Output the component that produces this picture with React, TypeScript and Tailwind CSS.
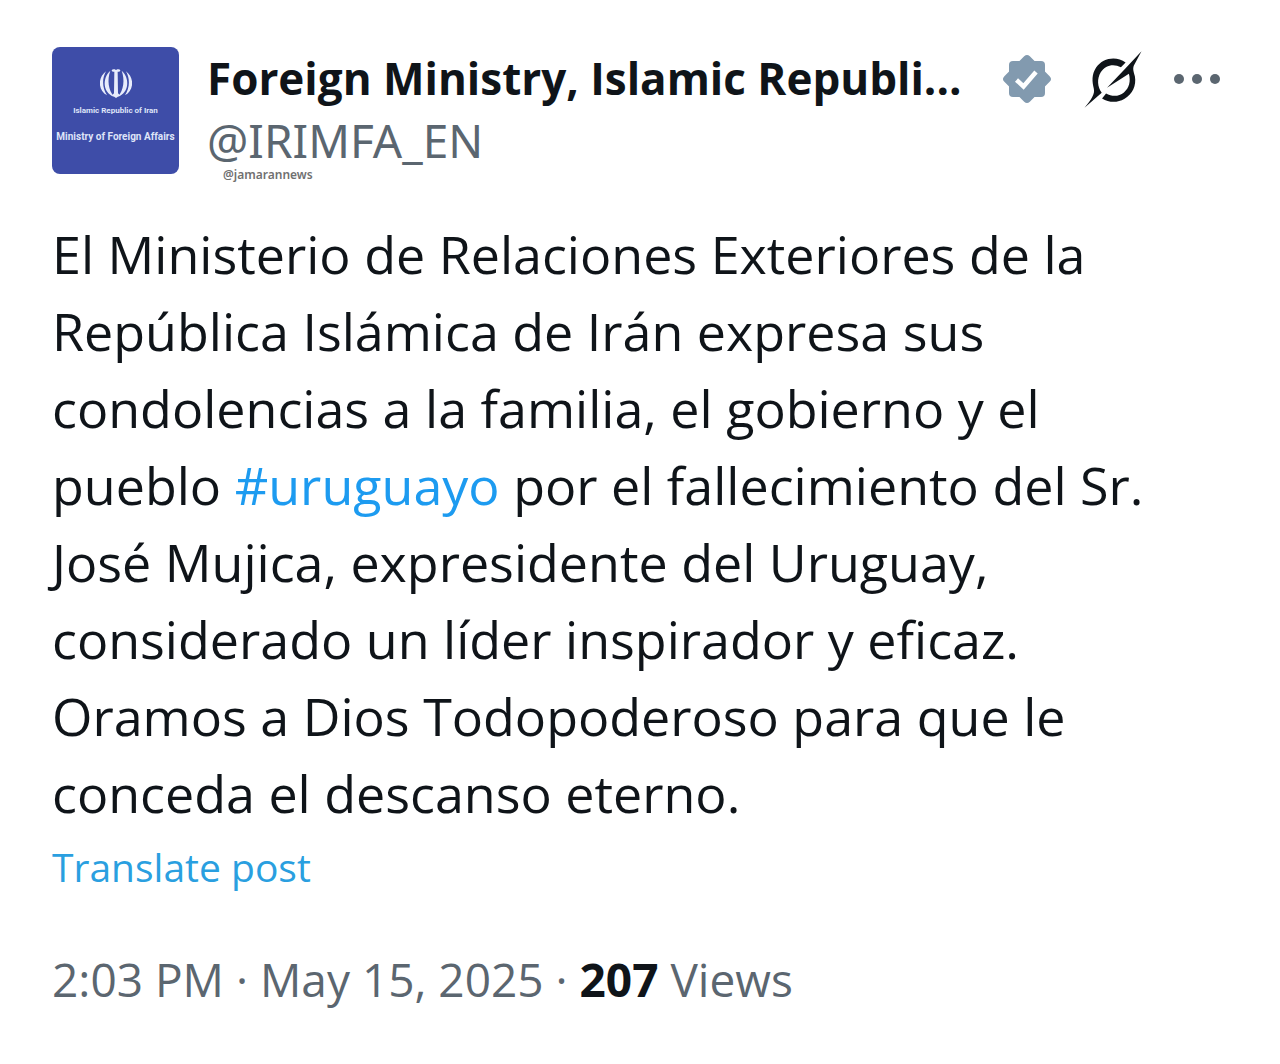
const post = {
  name: 'Foreign Ministry, Islamic Republi...',
  handle: '@IRIMFA_EN',
  watermark: '@jamarannews',
  time: '2:03 PM',
  date: 'May 15, 2025',
  views: '207',
};

function Avatar() {
  return (
    <a
      href="#profile"
      className="flex size-[127px] shrink-0 flex-col items-center overflow-hidden rounded-lg bg-[#3e4da8] pt-5 text-center font-['Roboto',sans-serif] font-bold whitespace-nowrap text-[#dfe4f8]"
    >
      <svg viewBox="0 0 96 90" className="h-8 w-8" fill="#e8ecfb" aria-hidden="true">
        <path d="M45 4 Q48 9 51 4 Q62 2 61 8 Q56 13 53 11 L54 76 L60 82 L48 90 L36 82 L42 76 L43 11 Q40 13 35 8 Q34 2 45 4Z" />
        <path d="M31 8 C6 30 8 74 42 86 C25 66 21 36 31 8Z" />
        <path d="M65 8 C90 30 88 74 54 86 C71 66 75 36 65 8Z" />
        <path d="M18 10 C-8 30 -6 66 21 82 C7 60 5 34 18 10Z" />
        <path d="M78 10 C104 30 102 66 75 82 C89 60 91 34 78 10Z" />
      </svg>
      <span className="mt-2 text-[8px] leading-2">Islamic Republic of Iran</span>
      <span className="mt-4 text-[10px] leading-3">Ministry of Foreign Affairs</span>
    </a>
  );
}

function VerifiedBadge() {
  return (
    <svg viewBox="0 0 50 50" className="size-[50px] shrink-0" role="img" aria-label="Verified">
      <g fill="#829aaf">
        <rect x="7" y="7" width="36" height="36" rx="4" />
        <rect x="7" y="7" width="36" height="36" rx="4" transform="rotate(45 25 25)" />
      </g>
      <path d="M14.5 26 L21.5 32.5 L34 18" fill="none" stroke="#fff" strokeWidth="4.5" />
    </svg>
  );
}

function GrokIcon() {
  return (
    <svg viewBox="14 8 174 172" className="h-[57px] w-[58px]" fill="#0f1419" aria-hidden="true">
      <path d="M139 43 C112 22 70 28 50 58 C36 80 38 100 43 121 C47 138 36 154 15 179 L67 134 C54 116 52 92 64 72 C78 50 103 45 125 57 Z" />
      <path d="M187 9 L164 52 C160 62 163 70 167 84 C172 112 160 138 136 152 C112 166 88 163 68 151 L80 136 C98 146 118 146 134 133 C150 120 155 100 149 77 L83 119 L139 60 Z" />
    </svg>
  );
}

export default function App() {
  return (
    <main className="min-h-screen bg-white font-['Open_Sans',sans-serif] text-[#0f1419]">
      <article className="px-[52px] pt-[47px]">
        {/* Author */}
        <header className="flex items-start">
          <Avatar />
          <div className="ml-7 min-w-0 flex-1">
            <h1 className="text-[44px] leading-[62px] font-bold whitespace-nowrap">{post.name}</h1>
            <p className="font-['Noto_Sans',sans-serif] text-[46px] leading-[62px] text-[#5b6670]">{post.handle}</p>
            <p className="pl-4 font-['Noto_Sans',sans-serif] text-xs leading-2 font-semibold text-[#707070]">
              {post.watermark}
            </p>
          </div>
          <div className="flex h-16 items-center">
            <VerifiedBadge />
            <button type="button" aria-label="Grok" className="ml-8">
              <GrokIcon />
            </button>
            <button type="button" aria-label="More" className="ml-8 flex gap-2 pr-2">
              <span className="size-2.5 rounded-full bg-[#5b6670]" />
              <span className="size-2.5 rounded-full bg-[#5b6670]" />
              <span className="size-2.5 rounded-full bg-[#5b6670]" />
            </button>
          </div>
        </header>

        {/* Body */}
        <p className="mt-9 text-[52px] leading-[77px] whitespace-nowrap">
          El Ministerio de Relaciones Exteriores de la
          <br />
          República Islámica de Irán expresa sus
          <br />
          condolencias a la familia, el gobierno y el
          <br />
          pueblo <a href="#uruguayo" className="text-[#1d9bf0]">#uruguayo</a> por el fallecimiento del Sr.
          <br />
          José Mujica, expresidente del Uruguay,
          <br />
          considerado un líder inspirador y eficaz.
          <br />
          Oramos a Dios Todopoderoso para que le
          <br />
          conceda el descanso eterno.
        </p>
        <button type="button" className="block text-[39px] leading-[72px] text-[#2a9fe0]">
          Translate post
        </button>

        {/* Meta */}
        <p className="mt-10 text-[46px] leading-[72px] text-[#5b6670]">
          {post.time} · {post.date} · <strong className="text-[#0f1419]">{post.views}</strong> Views
        </p>
      </article>
    </main>
  );
}
